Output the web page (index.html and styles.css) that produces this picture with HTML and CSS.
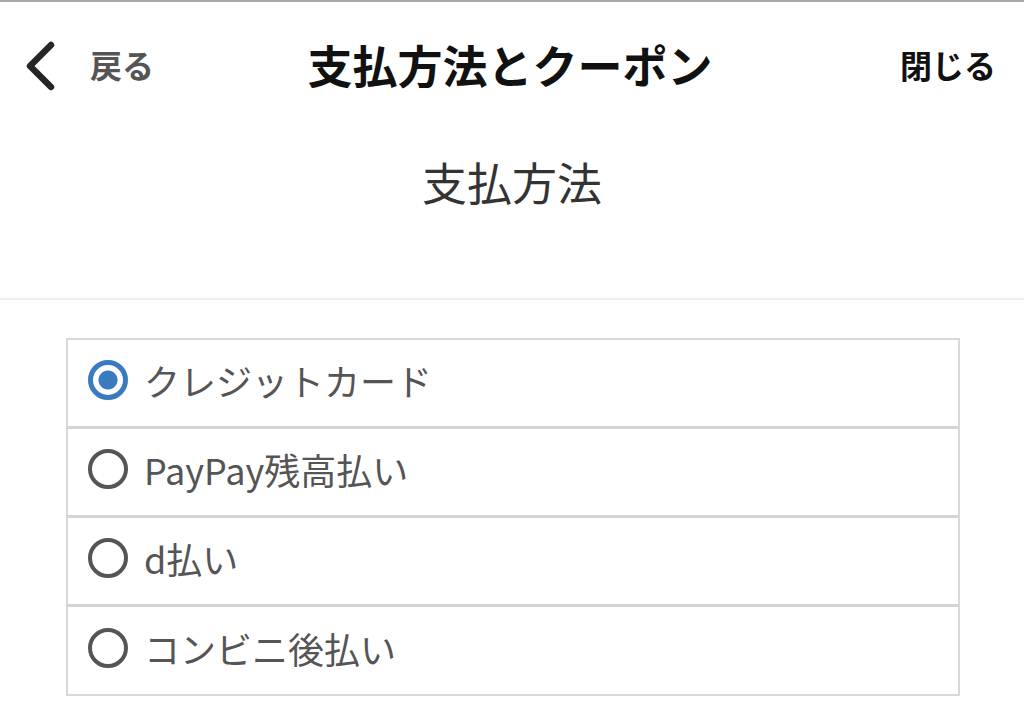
FILE: index.html
```html
<!DOCTYPE html>
<html lang="ja">
<head>
    <meta charset="UTF-8">
    <meta name="viewport" content="width=device-width, initial-scale=1.0">
    <title>支払方法とクーポン</title>
    <link rel="stylesheet" href="styles.css">
</head>
<body>
    <header class="top-bar">
        <a class="back" href="#">
            <svg class="back-icon" width="32" height="50" viewBox="0 0 32 50">
                <path d="M27 4 L6 25 L27 46" fill="none" stroke="#262626" stroke-width="6.5" stroke-linecap="round" stroke-linejoin="round"/>
            </svg>
            <span>戻る</span>
        </a>
        <h1 class="page-title">支払方法とクーポン</h1>
        <a class="close" href="#">閉じる</a>
    </header>

    <div class="section-head">
        <h2>支払方法</h2>
    </div>

    <form class="pay-list">
        <label class="pay-row">
            <input type="radio" name="pay" value="card" checked>
            <span class="radio"></span>
            <span class="pay-name">クレジットカード</span>
        </label>
        <label class="pay-row">
            <input type="radio" name="pay" value="paypay">
            <span class="radio"></span>
            <span class="pay-name">PayPay残高払い</span>
        </label>
        <label class="pay-row">
            <input type="radio" name="pay" value="d">
            <span class="radio"></span>
            <span class="pay-name">d払い</span>
        </label>
        <label class="pay-row">
            <input type="radio" name="pay" value="conveni">
            <span class="radio"></span>
            <span class="pay-name">コンビニ後払い</span>
        </label>
    </form>
</body>
</html>
```

FILE: styles.css
```css
body {
    margin: 0;
    font-family: "Noto Sans CJK JP", "Noto Sans", sans-serif;
    background-color: #fff;
    border-top: 2px solid #a9a9a9;
}

.top-bar {
    height: 124px;
    display: grid;
    grid-template-columns: 1fr auto 1fr;
    align-items: center;
    padding: 0 28px 0 24px;
}

.back {
    display: flex;
    align-items: center;
    gap: 34px;
    color: #555;
    text-decoration: none;
    font-size: 32px;
    font-weight: bold;
}

.back-icon {
    display: block;
    margin-top: 4px;
}

.page-title {
    margin: 0;
    font-size: 45px;
    font-weight: bold;
    color: #111;
}

.close {
    justify-self: end;
    color: #111;
    text-decoration: none;
    font-size: 32px;
    font-weight: bold;
}

.section-head {
    height: 174px;
    box-sizing: border-box;
    padding-top: 33px;
    border-bottom: 2px solid #eeeeee;
}

.section-head h2 {
    margin: 0;
    text-align: center;
    font-size: 45px;
    line-height: 45px;
    font-weight: normal;
    color: #333;
}

.pay-list {
    width: 894px;
    margin: 38px 0 0 66px;
    border: 2px solid #d8d8d8;
    box-sizing: border-box;
}

.pay-row {
    display: flex;
    align-items: center;
    gap: 16px;
    height: 89px;
    box-sizing: border-box;
    padding: 0 0 6px 20px;
    border-bottom: 3px solid #d4d4d4;
    cursor: pointer;
}

.pay-row:last-child {
    border-bottom: none;
    height: 87px;
}

.pay-row input {
    display: none;
}

.radio {
    width: 40px;
    height: 40px;
    box-sizing: border-box;
    border: 4px solid #555;
    border-radius: 50%;
    flex-shrink: 0;
}

.pay-row input:checked + .radio {
    border: 5px solid #3a7bbf;
    background: radial-gradient(circle, #3a7bbf 0, #3a7bbf 9px, #fff 10px);
}

.pay-name {
    font-size: 36px;
    color: #555;
}
```
